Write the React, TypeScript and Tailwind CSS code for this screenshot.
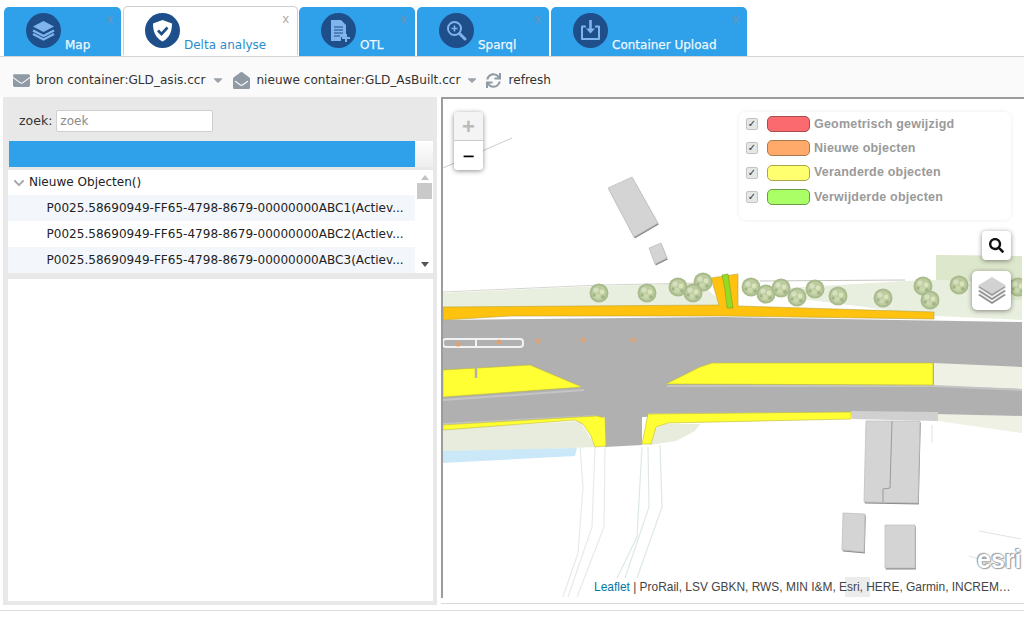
import React from "react";
import { FaEnvelope, FaEnvelopeOpen, FaSync, FaCaretDown, FaSearch, FaChevronDown } from "react-icons/fa";

const ICON = "#7fb4ec";

function IconLayers() {
  return (
    <svg viewBox="0 0 35 35" className="w-[35px] h-[35px]">
      <circle cx="17.5" cy="17.5" r="17.5" fill="#1f4f8b" />
      <path d="M17.5 8 L28 13.5 L17.5 19 L7 13.5 Z" fill={ICON} />
      <path d="M7 17.5 L17.5 23 L28 17.5 M7 21 L17.5 26.5 L28 21" fill="none" stroke={ICON} strokeWidth="2.4" />
    </svg>
  );
}
function IconShield() {
  return (
    <svg viewBox="0 0 35 35" className="w-[35px] h-[35px]">
      <circle cx="17.5" cy="17.5" r="17.5" fill="#1f4f8b" />
      <path d="M17.5 7 L27 10.5 C27 18 25 24.5 17.5 28.5 C10 24.5 8 18 8 10.5 Z" fill="#fff" />
      <path d="M13 17.5 L16.5 21 L22.5 14.5" fill="none" stroke="#1f4f8b" strokeWidth="2.6" />
    </svg>
  );
}
function IconDoc() {
  return (
    <svg viewBox="0 0 35 35" className="w-[35px] h-[35px]">
      <circle cx="17.5" cy="17.5" r="17.5" fill="#1f4f8b" />
      <path d="M10 7 H20 L25 12 V24 H20 V28 H10 Z" fill={ICON} />
      <path d="M13 14 H22 M13 17 H22 M13 20 H22 M13 23 H19" stroke="#1f4f8b" strokeWidth="1.2" />
      <path d="M25 21 V29 M21 25 H29" stroke={ICON} strokeWidth="2" />
    </svg>
  );
}
function IconZoom() {
  return (
    <svg viewBox="0 0 35 35" className="w-[35px] h-[35px]">
      <circle cx="17.5" cy="17.5" r="17.5" fill="#1f4f8b" />
      <circle cx="15.5" cy="15.5" r="6.5" fill="none" stroke={ICON} strokeWidth="2" />
      <path d="M20.5 20.5 L26 26" stroke={ICON} strokeWidth="3" strokeLinecap="round" />
      <path d="M15.5 12.5 V18.5 M12.5 15.5 H18.5" stroke={ICON} strokeWidth="1.6" />
    </svg>
  );
}
function IconUpload() {
  return (
    <svg viewBox="0 0 35 35" className="w-[35px] h-[35px]">
      <circle cx="17.5" cy="17.5" r="17.5" fill="#1f4f8b" />
      <path d="M13 13.5 H9 V26 H26 V13.5 H22" fill="none" stroke={ICON} strokeWidth="2" strokeLinejoin="round" />
      <path d="M17.5 7 V19" stroke={ICON} strokeWidth="2.6" />
      <path d="M13 15.5 L17.5 20.5 L22 15.5 Z" fill={ICON} />
    </svg>
  );
}

function Tab({ w, left, label, icon, active }: { w: string; left: string; label: string; icon: React.ReactNode; active?: boolean }) {
  return (
    <div
      className={
        w +
        " " +
        left +
        " relative flex h-full items-start rounded-t-[5px] pt-[6px] " +
        (active ? "bg-white border border-b-0 border-[#cfcfcf] text-[#2a8ccb] -mt-px h-[50px]" : "bg-[#2fa0ea] text-[#eef7fd] [-webkit-text-stroke:0.25px_#eef7fd]")
      }
    >
      {icon}
      <span className="ml-[4px] mt-[25px] text-[12px] leading-[14px] whitespace-nowrap">{label}</span>
      <span className={"absolute right-[8px] top-[6px] font-['Liberation_Sans',sans-serif] text-[13px] leading-[12px] [-webkit-text-stroke:0px] " + (active ? "text-[#aaaaaa]" : "text-[#6f93b5]")}>x</span>
    </div>
  );
}

function Legend({ color, border, label }: { color: string; border: string; label: string }) {
  return (
    <div className="flex h-[24.3px] items-center">
      <span className="flex h-[12px] w-[12px] items-center justify-center rounded-[2px] border border-[#c4c4c4] bg-[#e6e6e6] text-[10px] leading-none text-[#333]">✓</span>
      <span className={color + " " + border + " ml-[9px] h-[16px] w-[43px] rounded-[5px] border"} />
      <span className="ml-[4px] text-[12.5px] font-bold tracking-[0.2px] text-[#9a9a9a] font-['Liberation_Sans',sans-serif] whitespace-nowrap">{label}</span>
    </div>
  );
}

function Tree({ x, y }: { x: number; y: number }) {
  return (
    <g transform={`translate(${x} ${y})`}>
      <circle r="9.5" fill="#a9bb8c" />
      <circle r="7.5" fill="#bccca0" />
      <circle cx="-3" cy="-3" r="2.6" fill="#d6dfc0" />
      <circle cx="3" cy="-1" r="2.4" fill="#dbe3b8" />
      <circle cx="-1" cy="3" r="2.6" fill="#cbd8ae" />
      <circle cx="4" cy="4" r="1.8" fill="#9fb384" />
      <circle cx="-5" cy="2" r="1.5" fill="#9fb384" />
    </g>
  );
}

const trees: [number, number][] = [
  [599, 293], [647, 293], [678, 287], [703, 282], [693, 293], [751, 287], [766, 294], [781, 288],
  [797, 297], [815, 289], [838, 296], [883, 298], [923, 286], [930, 300], [959, 285], [1018, 287],
];

const shadowBuildings = [
  "M608 188 L632 177 L658 223 L634 237 Z",
  "M649 248 L661 243 L667 258 L655 264 Z",
  "M866 421 L920 421 L918 503 L864 502 Z",
  "M843 513 L865 514 L864 552 L842 550 Z",
  "M885 525 L915 525 L915 568 L885 568 Z",
];

function MapDrawing() {
  return (
    <svg viewBox="443 99 579 498" className="absolute left-0 top-0 h-[498px] w-[579px]">
      {/* verges */}
      <path d="M443 293 L600 286 L700 283 L725 305 L443 308 Z" fill="#e9efdf" />
      <path d="M739 291 L905 281 L936 280 L936 255 L1022 256 L1022 320 L936 316 Z" fill="#e9efdf" />
      <path d="M936 255 L1022 256 L1022 300 L972 300 L972 281 L936 280 Z" fill="#dde7cc" />
      <path d="M938 414 L1022 416 L1022 433 L938 421 Z" fill="#eef1e4" />
      <path d="M443 429 L580 421 L596 447 L520 450 L443 451 Z" fill="#e8ecdc" />
      <path d="M650 445 L676 441 L695 431 L700 424 L665 424 L652 430 Z" fill="#e8ecdc" />
      <path d="M443 451 L577 448 L575 456 L443 463 Z" fill="#cbe8f8" />
      {/* thin lines */}
      <path d="M443 168 L512 138" stroke="#cccccc" strokeWidth="1" fill="none" />
      <path d="M443 292 L600 285 L700 283" stroke="#d6d6d0" strokeWidth="1" fill="none" />
      <path d="M760 281 L905 280" stroke="#c4c4c0" strokeWidth="1" fill="none" />
      <path d="M979 531 L1021 539 M969 556 L982 560 M932 425 V443" stroke="#e2e2e2" strokeWidth="1" fill="none" />
      <path d="M580 447 L583 487 L578 553 L563 597 M595 447 L592 527 L568 597 M605 447 L604 527 L577 597" stroke="#e9e9e7" strokeWidth="1.2" fill="none" />
      <path d="M642 447 L637 537 L617 578 M648 447 L649 507 L625 578 M660 445 L662 507 L637 578" stroke="#dde8e8" strokeWidth="1.2" fill="none" />
      {/* road */}
      <path d="M443 320 L724 317 L1022 322 L1022 416 L852 412 L642 417 L642 445 L605 447 L605 417 L443 424 Z" fill="#b0b0b0" />
      <path d="M934 363 L1022 367 L1022 389 L934 386 Z" fill="#eef1e4" />
      <path d="M443 400 L584 390 M667 386 L934 386 L1022 390 M443 424 L597 416 M648 414 L851 413" stroke="#c4c4c4" strokeWidth="2" fill="none" />
      <path d="M851 411 L938 412 L938 421 L852 419 Z" fill="#d0d0d0" />
      {/* bike path */}
      <rect x="443" y="339" width="80" height="8" rx="3" fill="none" stroke="#f2f2f2" strokeWidth="2" />
      <path d="M476 338 V348" stroke="#f2f2f2" strokeWidth="2" />
      {[[458, 344], [499, 342], [538, 341], [583, 340], [633, 340]].map(([x, y]) => (
        <circle key={x} cx={x} cy={y} r="2.6" fill="#dba478" />
      ))}
      {/* orange */}
      <path d="M443 307 L719 305 L711 278 L738 274 L738 306 L934 312 L934 319 L724 316 L510 316 L443 320 Z" fill="#ffc20e" stroke="#b8a23c" strokeWidth="0.6" />
      <path d="M722 275 L728 274 L733 308 L727 308 L725 290 Z" fill="#92dd24" stroke="#7d9a2a" strokeWidth="0.6" />
      {/* yellow */}
      <path d="M443 370 L530 365 L582 387 L443 397 Z" fill="#ffff33" stroke="#bdb83a" strokeWidth="0.6" />
      <path d="M666 384 L700 367 L712 363 L933 363 L933 385 Z" fill="#ffff33" stroke="#bdb83a" strokeWidth="0.6" />
      <path d="M443 425 L597 416 L605 418 L606 446 L595 447 L591 436 L583 424 L575 420 L443 430 Z" fill="#ffff33" stroke="#bdb83a" strokeWidth="0.6" />
      <path d="M648 414 L851 412 L851 419 L668 423 L656 427 L651 444 L642 444 Z" fill="#ffff33" stroke="#bdb83a" strokeWidth="0.6" />
      <path d="M476 368 V378" stroke="#b0b0b0" strokeWidth="2.5" />
      {/* buildings */}
      <g fill="#8c8c8c" transform="translate(0.8 1.6)">
        {shadowBuildings.map((d) => (
          <path key={d} d={d} />
        ))}
      </g>
      <g fill="#d4d4d4" stroke="#c0c0c0" strokeWidth="0.8">
        {shadowBuildings.map((d) => (
          <path key={d} d={d} />
        ))}
      </g>
      <path d="M892 421 L890 488 L883 489 L883 502" stroke="#9a9a9a" strokeWidth="1" fill="none" />
      <path d="M845 577 L870 577 L870 597 L845 597 Z" fill="#ececec" />
      {trees.map(([x, y]) => (
        <Tree key={x} x={x} y={y} />
      ))}
    </svg>
  );
}

function Row({ n, alt }: { n: number; alt: boolean }) {
  return (
    <div className={(alt ? "bg-[#f3f6fb] " : "bg-white ") + "flex h-[26px] items-center pl-[38.5px] text-[12.05px] text-[#222] whitespace-nowrap"}>
      {`P0025.58690949-FF65-4798-8679-00000000ABC${n}(Actiev...`}
    </div>
  );
}

export default function App() {
  return (
    <div className="h-[619px] w-[1024px] overflow-hidden bg-white font-['DejaVu_Sans','Liberation_Sans',sans-serif] text-[#333]">
      {/* tabs */}
      <div className="flex h-[57px] items-start border-b border-[#d4d4d4] pl-[4px] pt-[7px]">
        <Tab w="w-[117px]" left="pl-[22px]" label="Map" icon={<IconLayers />} />
        <div className="w-[2px]" />
        <Tab w="w-[175px]" left="pl-[21px]" label="Delta analyse" icon={<IconShield />} active />
        <div className="w-px" />
        <Tab w="w-[116px]" left="pl-[22px]" label="OTL" icon={<IconDoc />} />
        <div className="w-[2px]" />
        <Tab w="w-[132px]" left="pl-[22px]" label="Sparql" icon={<IconZoom />} />
        <div className="w-[2px]" />
        <Tab w="w-[196px]" left="pl-[22px]" label="Container Upload" icon={<IconUpload />} />
      </div>
      {/* toolbar */}
      <div className="flex h-[40px] items-center bg-[#fafafa] pl-[13px] pt-[6px] text-[12.1px]">
        <FaEnvelope className="h-[17px] w-[17px] text-[#8f9aa5]" />
        <span className="ml-[6px] whitespace-nowrap">bron container:GLD_asis.ccr</span>
        <FaCaretDown className="ml-[6px] h-[14px] w-[14px] text-[#9aa3ab]" />
        <FaEnvelopeOpen className="ml-[8px] h-[17px] w-[17px] text-[#8f9aa5]" />
        <span className="ml-[6px] whitespace-nowrap">nieuwe container:GLD_AsBuilt.ccr</span>
        <FaCaretDown className="ml-[5px] h-[14px] w-[14px] text-[#9aa3ab]" />
        <FaSync className="ml-[7px] h-[15px] w-[15px] text-[#8f9aa5]" />
        <span className="ml-[7px] whitespace-nowrap">refresh</span>
      </div>
      {/* main */}
      <div className="flex h-[508px] pl-[3px]">
        <div className="flex w-[434px] flex-col bg-[#e8e8e8] pb-[4px] pl-[5px] pr-[4px] pt-px">
          <div className="flex h-[43px] items-center pl-[11px] pt-[3px] text-[12.5px]">
            <span>zoek:</span>
            <input
              placeholder="zoek"
              readOnly
              className="ml-[4px] h-[22px] w-[157px] rounded-[2px] border border-[#cfcfcf] bg-white px-[3px] text-[12px] outline-none placeholder:text-[#8a8a8a]"
            />
          </div>
          <div className="flex h-[26px] shrink-0 pl-px">
            <div className="w-[406px] bg-[#2fa0ea]" />
            <div className="flex-1 bg-gradient-to-b from-white to-[#eeeeee]" />
          </div>
          <div className="mt-[3px] flex h-[103px] shrink-0 bg-white">
            <div className="w-[407px]">
              <div className="flex h-[25px] items-center pl-[5px] text-[12.05px] text-[#222]">
                <FaChevronDown className="h-[12px] w-[12px] text-[#a8a8a8]" />
                <span className="ml-[4px]">Nieuwe Objecten()</span>
              </div>
              <Row n={1} alt />
              <Row n={2} alt={false} />
              <Row n={3} alt />
            </div>
            <div className="flex flex-1 flex-col items-center pl-px">
              <span className="mt-[5px] h-0 w-0 border-x-[4px] border-b-[5px] border-x-transparent border-b-[#c2c2c2]" />
              <span className="mt-[3px] h-[16px] w-[15px] bg-[#c9c9c9]" />
              <span className="mb-[6px] mt-auto h-0 w-0 border-x-[4px] border-t-[5px] border-x-transparent border-t-[#555]" />
            </div>
          </div>
          <div className="mt-[6px] flex-1 bg-white" />
        </div>
        <div className="w-[4px] bg-white" />
        <div className="flex-1 h-[507px] border-b border-[#d8d8d8]">
          <div className="relative h-[501px] border-l-2 border-t-2 border-[#9c9c9c] bg-white">
            <MapDrawing />
            {/* zoom */}
            <div className="absolute left-[11px] top-[13px] flex w-[29px] flex-col overflow-hidden rounded-[4px] shadow-[0_1px_5px_rgba(0,0,0,0.45)]">
              <div className="flex h-[29px] items-center justify-center border-b border-[#cccccc] bg-[#f4f4f4] font-['Liberation_Sans',sans-serif] text-[22px] font-bold text-[#bbbbbb]">+</div>
              <div className="flex h-[29px] items-center justify-center bg-white font-['Liberation_Sans',sans-serif] text-[20px] font-normal text-black [-webkit-text-stroke:0.3px_#000]">−</div>
            </div>
            {/* legend */}
            <div className="absolute left-[296px] top-[13px] h-[108px] w-[272px] rounded-[7px] bg-white pl-[7px] shadow-[0_0_4px_rgba(0,0,0,0.08)]">
              <Legend color="bg-[#fb6a6f]" border="border-[#a84a4a]" label="Geometrisch gewijzigd" />
              <Legend color="bg-[#ffaa6a]" border="border-[#a87a4a]" label="Nieuwe objecten" />
              <Legend color="bg-[#ffff70]" border="border-[#a8a84a]" label="Veranderde objecten" />
              <Legend color="bg-[#aaff66]" border="border-[#6a9a4a]" label="Verwijderde objecten" />
            </div>
            {/* search */}
            <div className="absolute left-[539px] top-[132px] flex h-[29px] w-[29px] items-center justify-center rounded-[4px] bg-white shadow-[0_1px_5px_rgba(0,0,0,0.45)]">
              <FaSearch className="h-[15px] w-[15px] text-[#111]" />
            </div>
            {/* layers */}
            <div className="absolute left-[529px] top-[172px] flex h-[39px] w-[39px] items-center justify-center rounded-[5px] bg-white shadow-[0_1px_5px_rgba(0,0,0,0.45)]">
              <svg viewBox="0 0 28 28" className="h-[28px] w-[28px]">
                <path d="M14 11 L28 18 L14 27 L0 18 Z" fill="#8e8e8e" />
                <path d="M14 9 L28 16 L14 25 L0 16 Z" fill="#f0f0f0" />
                <path d="M14 7 L28 14 L14 23 L0 14 Z" fill="#8e8e8e" />
                <path d="M14 5 L28 12 L14 21 L0 12 Z" fill="#f0f0f0" />
                <path d="M14 3 L28 10 L14 19 L0 10 Z" fill="#9a9a9a" />
                <path d="M14 0 L28 8.5 L14 17 L0 8.5 Z" fill="#d2d2d2" />
              </svg>
            </div>
            {/* esri */}
            <span className="absolute left-[534px] top-[447px] font-['Liberation_Sans',sans-serif] text-[25px] font-bold leading-[26px] text-white [text-shadow:0_0_1px_#777,0_0_2px_#999,1px_1px_1px_#aaa,-1px_-1px_1px_#aaa]">esri</span>
            {/* attribution */}
            <div className="absolute left-[151px] top-[480px] w-[418px] overflow-hidden whitespace-nowrap font-['Liberation_Sans',sans-serif] text-[11.95px] leading-[16px] text-[#444]">
              <span className="text-[#0078a8]">Leaflet</span> | ProRail, LSV GBKN, RWS, MIN I&amp;M, Esri, HERE, Garmin, INCREM…
            </div>
          </div>
        </div>
      </div>
      <div className="mt-[5px] h-px bg-[#dddddd]" />
    </div>
  );
}
